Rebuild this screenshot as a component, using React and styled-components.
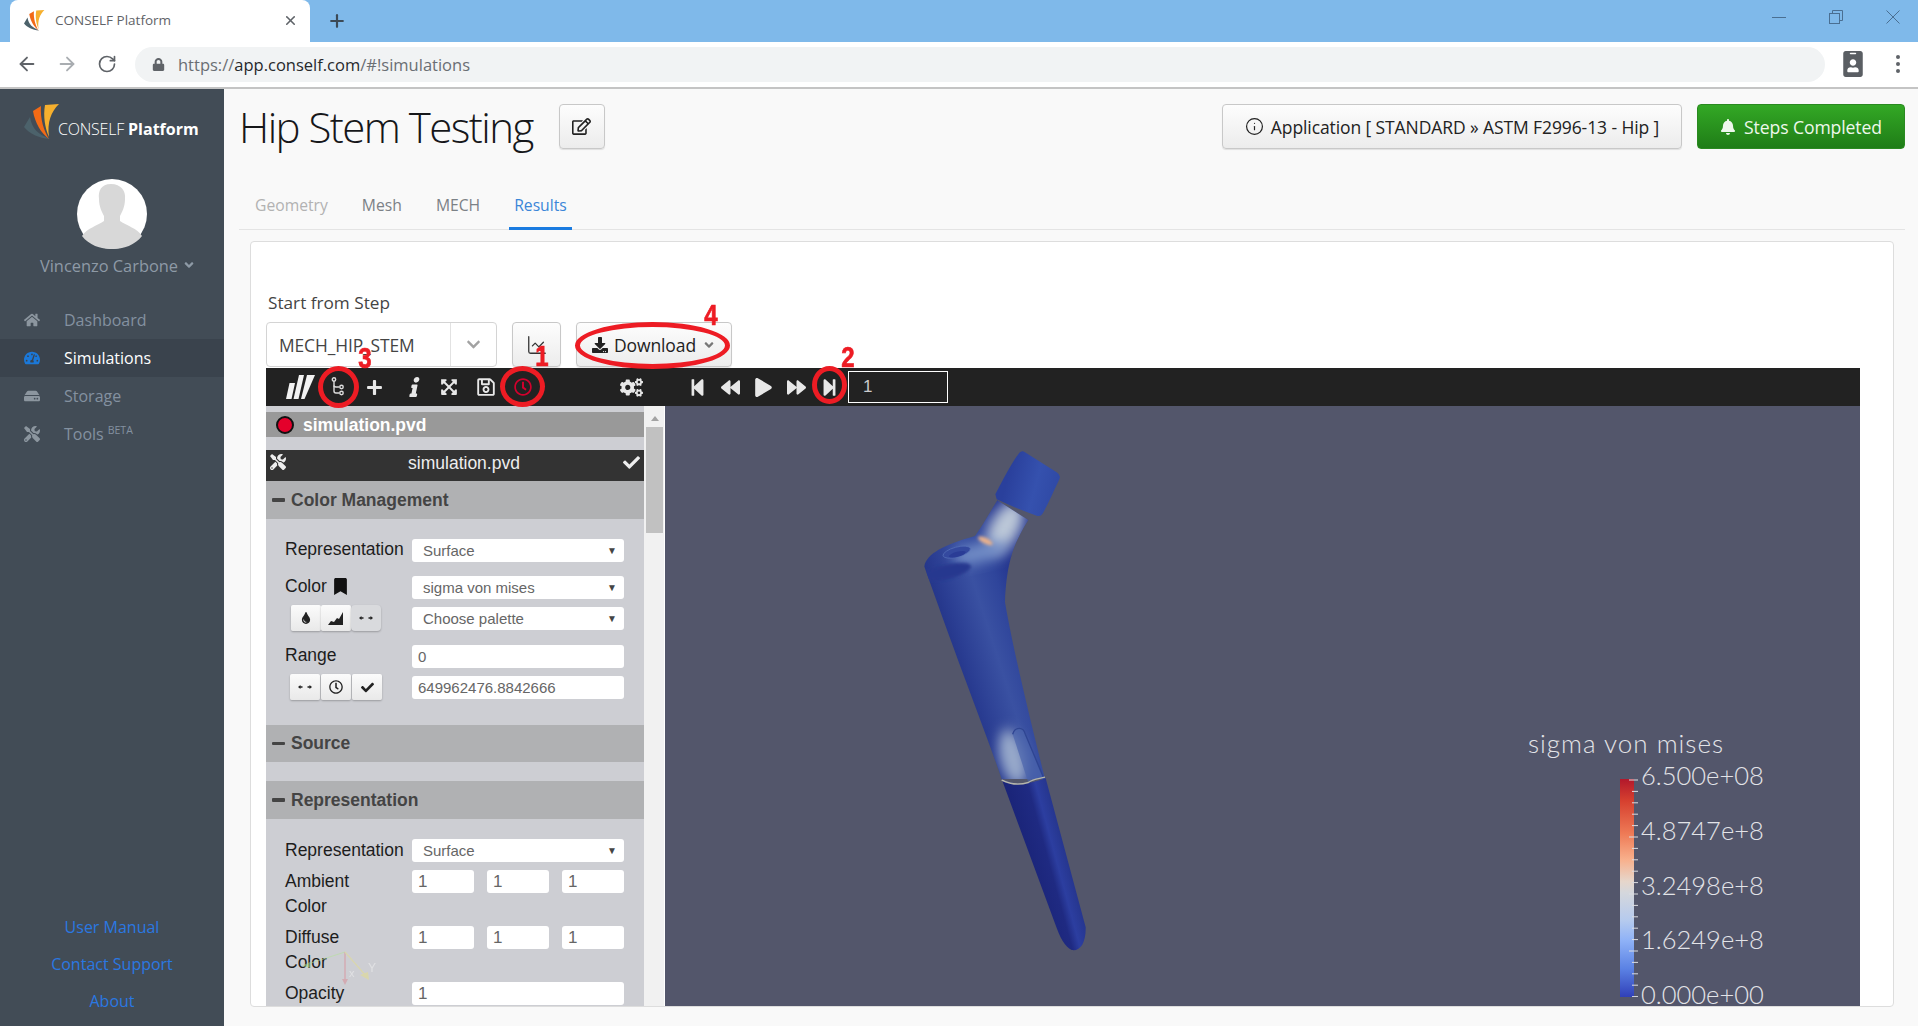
import React from 'react'
import styled, { createGlobalStyle } from 'styled-components'
import {
  FaHome, FaTachometerAlt, FaHdd, FaTools, FaChevronDown, FaAngleDown, FaRegEdit, FaBell,
  FaDownload, FaPlus, FaInfo, FaRegSave, FaRegClock, FaCogs, FaStepBackward,
  FaBackward, FaPlay, FaForward, FaStepForward, FaCheck, FaBookmark, FaTint, FaLock, FaIdBadge,
  FaExpandArrowsAlt,
} from 'react-icons/fa'
import { ArrowLeft, ArrowRight, RotateCw, Plus, X, Info, ChartLine } from 'lucide-react'

const GlobalStyle = createGlobalStyle`
  html, body { margin: 0; padding: 0; height: 100%; overflow: hidden; background: #f9f9f9; }
  * { box-sizing: border-box; }
  body { font-family: 'Open Sans', sans-serif; }
`

const Page = styled.div`
  position: relative;
  width: 1918px;
  height: 1026px;
  overflow: hidden;
  display: flex;
  flex-direction: column;
`

/* browser chrome */
const TabStrip = styled.div`
  height: 42px;
  background: #7fb9ea;
  display: flex;
  align-items: flex-end;
  padding-left: 10px;
  flex-shrink: 0;
`
const BrowserTab = styled.div`
  width: 300px;
  height: 42px;
  background: #fff;
  border-radius: 8px 8px 0 0;
  display: flex;
  align-items: center;
  padding: 0 12px 2px 14px;
  font-size: 13.5px;
  color: #5f6368;
`
const TabTitle = styled.span`
  flex: 1;
  margin-left: 10px;
`
const NewTab = styled.div`
  width: 54px;
  height: 42px;
  display: flex;
  align-items: center;
  justify-content: center;
  color: #3c4a57;
`
const WindowButtons = styled.div`
  margin-left: auto;
  height: 42px;
  display: flex;
  align-items: center;
  gap: 43px;
  padding: 0 18px 8px 0;
  color: #4a6f92;
`
const AddressBar = styled.div`
  height: 47px;
  background: #fff;
  border-bottom: 2px solid #c4c4c4;
  display: flex;
  align-items: center;
  padding: 0 16px 1px 17px;
  flex-shrink: 0;
`
const NavButton = styled.div`
  width: 40px;
  display: flex;
  justify-content: center;
  margin-left: ${p => p.$first ? '-10px' : '0'};
  color: ${p => p.$off ? '#a9adb1' : '#5f6368'};
`
const Omnibox = styled.div`
  width: 1690px;
  height: 35px;
  margin-left: 8px;
  border-radius: 18px;
  background: #f1f3f4;
  display: flex;
  align-items: center;
  padding-left: 17px;
  font-size: 16.5px;
  color: #6a6e73;
`
const Url = styled.span`
  margin-left: 13px;
  padding-top: 1px;
`
const Host = styled.span`
  color: #26282b;
`
const Dots = styled.div`
  margin-left: 30px;
  display: flex;
  flex-direction: column;
  gap: 3px;
  span {
    width: 4px;
    height: 4px;
    border-radius: 50%;
    background: #5f6368;
  }
`
const BadgeIcon = styled.div`
  margin-left: 15px;
  color: #5a5e63;
  display: flex;
`

/* app layout */
const Body = styled.div`
  flex: 1;
  display: flex;
  min-height: 0;
`
const Sidebar = styled.aside`
  width: 224px;
  flex-shrink: 0;
  background: #424c56;
  display: flex;
  flex-direction: column;
  align-items: stretch;
`
const Brand = styled.div`
  height: 90px;
  display: flex;
  padding: 15px 0 0 24px;
  color: #fff;
  font-size: 16px;
`
const BrandText = styled.span`
  margin: 14px 0 0 -2px;
  white-space: nowrap;
  font-weight: 300;
  letter-spacing: -0.2px;
  b { font-weight: 700; letter-spacing: 0; }
`
const AvatarWrap = styled.div`
  display: flex;
  justify-content: center;
`
const UserName = styled.div`
  margin-top: 4px;
  height: 24px;
  display: flex;
  justify-content: center;
  align-items: center;
  gap: 4px;
  padding-left: 12px;
  color: #8e9aa6;
  font-size: 16.4px;
`
const NavList = styled.nav`
  margin-top: 24px;
`
const NavItem = styled.div`
  height: 38px;
  display: flex;
  align-items: center;
  padding-left: 24px;
  font-size: 16px;
  background: ${p => p.$active ? '#3a434d' : 'transparent'};
  color: ${p => p.$active ? '#fff' : '#8491a0'};
  svg { color: ${p => p.$active ? '#1b78d8' : '#8c969f'}; width: 16px; height: 16px; }
  span { margin-left: 24px; }
  sup { font-size: 10.5px; margin-left: 4px; line-height: 0; }
`
const FooterLinks = styled.div`
  margin-top: auto;
  padding-bottom: 13px;
  display: flex;
  flex-direction: column;
  align-items: center;
  gap: 13px;
  color: #2a78e2;
  font-size: 16px;
  line-height: 24px;
`
const Main = styled.main`
  flex: 1;
  min-width: 0;
  padding: 15px 13px 0 15px;
  background: #f9f9f9;
`
const Header = styled.header`
  height: 45px;
  display: flex;
  align-items: center;
`
const Title = styled.h1`
  margin: 0;
  font-size: 42px;
  font-weight: 300;
  letter-spacing: -1.55px;
  color: #16171a;
  line-height: 45px;
  white-space: nowrap;
`
const GreyButton = styled.div`
  height: ${p => p.$h || 45}px;
  width: ${p => p.$w}px;
  border: 1px solid #c8c8c8;
  border-radius: 4px;
  background: linear-gradient(#fdfdfd, #ececec);
  box-shadow: 0 1px 1px rgba(0, 0, 0, 0.1);
  display: flex;
  align-items: center;
  justify-content: center;
  gap: ${p => p.$gap || 6}px;
  font-size: 17.5px;
  letter-spacing: -0.1px;
  color: #222;
  flex-shrink: 0;
`
const EditButton = styled(GreyButton)`
  margin-left: 26px;
`
const AppButton = styled(GreyButton)`
  margin-left: auto;
`
const GreenButton = styled.div`
  margin-left: 15px;
  width: 208px;
  height: 45px;
  border: 1px solid #2a8a20;
  border-radius: 4px;
  background: linear-gradient(#33a825, #1f7d17);
  color: #eef8ec;
  display: flex;
  align-items: center;
  justify-content: center;
  gap: 8px;
  font-size: 17.6px;
  letter-spacing: -0.1px;
`
const Tabs = styled.div`
  margin-top: 35px;
  height: 46px;
  border-bottom: 1px solid #e4e4e4;
  display: flex;
  padding-left: 11px;
  gap: 24px;
`
const Tab = styled.div`
  height: 46px;
  padding: 9px 5px 0;
  font-size: 15.7px;
  line-height: 24px;
  color: ${p => p.$active ? '#3b86d8' : p.$off ? '#b2b2b2' : '#7c8186'};
  border-bottom: 3px solid ${p => p.$active ? '#1a7be0' : 'transparent'};
`
const Card = styled.section`
  margin: 11px 11px 0 11px;
  height: 766px;
  background: #fff;
  border: 1px solid #ddd;
  border-radius: 4px;
  padding: 49px 33px 0 15px;
`
const StepLabel = styled.div`
  font-size: 17.2px;
  line-height: 24px;
  color: #444;
  padding-left: 2px;
`
const StepRow = styled.div`
  margin-top: 7px;
  margin-bottom: 1px;
  display: flex;
  gap: 15px;
`
const StepSelect = styled.div`
  width: 231px;
  height: 45px;
  border: 1px solid #d4d4d4;
  border-radius: 4px;
  display: flex;
  align-items: center;
  font-size: 17.4px;
  letter-spacing: -0.1px;
  color: #444;
`
const StepValue = styled.div`
  width: 183px;
  padding-left: 12px;
`
const StepArrow = styled.div`
  flex: 1;
  height: 100%;
  border-left: 1px solid #e2e2e2;
  display: flex;
  align-items: center;
  justify-content: center;
  color: #a2a2a2;
`

/* viewer */
const Toolbar = styled.div`
  height: 38px;
  background: #222;
  display: flex;
  align-items: center;
  padding-left: 16px;
  color: #eee;
`
const ToolButton = styled.div`
  width: ${p => p.$w || 37}px;
  margin-left: ${p => p.$ml || 0}px;
  display: flex;
  justify-content: center;
  color: ${p => p.$red ? '#d3002d' : '#e8e8e8'};
  flex-shrink: 0;
`
const ItalicInfo = styled(FaInfo)`
  transform: translateX(3px) skewX(-12deg);
`
const StepInput = styled.div`
  margin-left: 2px;
  width: 100px;
  height: 32px;
  border: 1px solid #fff;
  padding-left: 14px;
  font: 17px/30px 'Liberation Sans', sans-serif;
  color: #ccc;
`
const Workspace = styled.div`
  height: 600px;
  display: flex;
`
const Panel = styled.div`
  width: 378px;
  height: 600px;
  overflow: hidden;
  background: #cdced3;
  padding-top: 6px;
  font-family: 'Liberation Sans', sans-serif;
  flex-shrink: 0;
`
const FileHead = styled.div`
  height: 25px;
  background: #999;
  display: flex;
  align-items: center;
  padding: 1px 0 0 10px;
  color: #fff;
  font-size: 17.5px;
  font-weight: 700;
`
const RedDot = styled.span`
  width: 18px;
  height: 18px;
  border-radius: 50%;
  border: 2px solid #111;
  background: #e4002b;
  margin-right: 9px;
`
const FileRow = styled.div`
  margin-top: 13px;
  height: 31px;
  background: #333;
  color: #eee;
  font-size: 17.5px;
  display: flex;
  align-items: center;
  justify-content: center;
  padding: 0 0 4px 18px;
  position: relative;
`
const FileTool = styled.span`
  position: absolute;
  top: 4px;
  left: ${p => p.$left || 'auto'};
  right: ${p => p.$right || 'auto'};
  color: #eee;
`
const SectionHead = styled.div`
  height: ${p => p.$h || 38}px;
  background: #b0b1b3;
  display: flex;
  align-items: center;
  padding-left: 6px;
  gap: 6px;
  font-size: 17.5px;
  font-weight: 700;
  color: #444;
`
const Minus = styled.span`
  width: 13px;
  height: 3.5px;
  background: #444;
  border-radius: 1px;
`
const SectionBody = styled.div`
  padding: ${p => p.$pt ?? 20}px 20px ${p => p.$pb ?? 0}px 19px;
`
const Row = styled.div`
  display: flex;
  align-items: flex-start;
  margin-top: ${p => p.$mt || 0}px;
`
const Label = styled.div`
  width: 127px;
  flex-shrink: 0;
  margin: ${p => p.$low ? '-1px 0 -1px' : '-2px 0 0'};
  font-size: 17.5px;
  line-height: 25px;
  color: #1d1d1d;
  display: flex;
  align-items: center;
  gap: 5px;
`
const Side = styled.div`
  width: 127px;
  flex-shrink: 0;
  padding-left: ${p => p.$pl || 6}px;
  display: flex;
  margin: -2px 0 -1px;
`
const Field = styled.div`
  flex: 1;
  height: 23px;
  background: #fff;
  border-radius: 3px;
  font-size: ${p => p.$big ? 17 : 15}px;
  line-height: 23px;
  color: #666;
  padding-left: ${p => p.$select ? 11 : 6}px;
  position: relative;
  &::after {
    content: ${p => p.$select ? "'▼'" : 'none'};
    position: absolute;
    right: 7px;
    top: 0;
    font-size: 10px;
    color: #444;
  }
`
const TripleFields = styled.div`
  flex: 1;
  display: flex;
  gap: 13px;
`
const SmallButton = styled.div`
  width: 30px;
  height: 26px;
  background: ${p => p.$dim ? '#d9dadd' : 'linear-gradient(#fbfbfb, #e9e9e9)'};
  box-shadow: 0 1px 2px rgba(0, 0, 0, 0.25);
  border-radius: ${p => p.$dim ? '4px' : '2px'};
  display: flex;
  align-items: center;
  justify-content: center;
  color: #222;
  margin-right: ${p => p.$gap || 0}px;
`
const Scrollbar = styled.div`
  width: 20px;
  background: #f1f1f1;
  padding: 10px 1px 0 2px;
  flex-shrink: 0;
`
const ScrollUp = styled.div`
  width: 0;
  height: 0;
  margin: 0 auto 6px;
  border: 4px solid transparent;
  border-top: 0;
  border-bottom: 5px solid #a3a3a3;
`
const ScrollThumb = styled.div`
  height: 106px;
  background: #c1c1c1;
`
const Viewer = styled.div`
  flex: 1;
  margin-left: 1px;
  background: #53566b;
  position: relative;
`
const StemSvg = styled.svg`
  position: absolute;
  left: 215px;
  top: 14px;
  filter: blur(0.5px);
`
const Legend = styled.div`
  position: absolute;
  left: 863px;
  top: 324px;
  font-family: 'Lato', sans-serif;
  font-weight: 300;
  color: #e3e4e8;
`
const LegendTitle = styled.div`
  font-size: 26px;
  line-height: 26px;
  letter-spacing: 1px;
  white-space: nowrap;
`
const Scale = styled.div`
  position: relative;
  margin: 7px 0 0 92px;
  height: 243px;
  display: flex;
`
const ColorBar = styled.div`
  margin-top: 16px;
  width: 14px;
  height: 218px;
  background: linear-gradient(#b2182b, #d6402f 10%, #ee7a56 25%, #f8b08c 37%, #e6d6cb 47%, #d5d7dc 52%, #b5caee 65%, #8fb2f7 74%, #5b82e4 87%, #3040b8);
`
const Ticks = styled.svg`
  margin-top: 16px;
  margin-left: -5px;
  width: 9px;
  height: 218px;
`
const TickLabels = styled.div`
  margin-left: 3px;
  height: 243px;
  display: flex;
  flex-direction: column;
  justify-content: space-between;
  font-size: 25.5px;
  line-height: 24px;
  text-align: right;
  white-space: nowrap;
`

/* hand-drawn red annotations over the screenshot */
const Ring = styled.div`
  position: absolute;
  left: ${p => p.$x}px;
  top: ${p => p.$y}px;
  width: ${p => p.$w}px;
  height: ${p => p.$h}px;
  border: 5px solid #ed1c24;
  border-radius: 50%;
  pointer-events: none;
`
const Num = styled.div`
  position: absolute;
  left: ${p => p.$x - 12}px;
  top: ${p => p.$y - 17}px;
  width: 24px;
  text-align: center;
  font: 700 30px/34px 'Liberation Sans', sans-serif;
  -webkit-text-stroke: 0.7px #ed1c24;
  color: #ed1c24;
  transform: scaleX(0.8);
  pointer-events: none;
`
const Gizmo = styled.svg`
  position: absolute;
  left: 300px;
  top: 945px;
  opacity: 0.55;
  pointer-events: none;
`

const Logo = ({ size = 36 }) => (
  <svg width={size} height={size} viewBox="0 0 36 36">
    <path d="M0 23 L6 13 C8 25 14 30 26 35 C14 34 6 30 0 23Z" fill="#4c626b" />
    <path d="M9 7 L17 2 C16 15 20 27 25 35 C17 29 11 19 9 7Z" fill="#f26a16" />
    <path d="M21 1 L35 0 C27 8 23 18 25 33 C21 24 19 12 21 1Z" fill="#f6b02e" />
  </svg>
)

const Avatar = () => (
  <svg width="70" height="70" viewBox="0 0 70 70">
    <circle cx="35" cy="35" r="35" fill="#fff" />
    <path d="M34 5 C24 5 21 12 22 20 C22 28 25 33 27 37 L27 42 C20 47 10 49 5 57 C12 66 23 70 35 70 C47 70 58 66 65 57 C60 49 50 47 43 42 L43 37 C45 33 48 28 48 20 C49 12 44 5 34 5Z" fill="#d8d8d8" />
  </svg>
)

const RestoreIcon = () => (
  <svg width="14" height="14" viewBox="0 0 14 14" fill="none" stroke="currentColor">
    <rect x="0.5" y="3.5" width="10" height="10" />
    <path d="M3.5 3.5 V0.5 H13.5 V10.5 H10.5" />
  </svg>
)

const BarsLogo = () => (
  <svg width="29" height="24" viewBox="0 0 29 24" fill="#f2f2f2">
    <path d="M0 24 L3.5 8 H9 L5.5 24Z" />
    <path d="M7.5 24 L13 0 H18 L12.5 24Z" />
    <path d="M15 24 L21 0 H29 L18.5 24Z" />
  </svg>
)

const TreeIcon = () => (
  <svg width="14" height="20" viewBox="0 0 14 20" fill="none" stroke="#ddd" strokeWidth="1.4">
    <circle cx="3" cy="2.5" r="1.7" />
    <path d="M3 4.2 V14 Q3 16 5 16 H8.5" />
    <path d="M3 8.5 Q3 10 5 10 H8.5" />
    <circle cx="10.5" cy="10" r="1.7" />
    <circle cx="10.5" cy="16" r="1.7" />
  </svg>
)

const SplitArrows = () => (
  <svg width="14" height="8" viewBox="0 0 14 8" fill="#222">
    <path d="M0 4 L2.5 2 V3.3 H4.5 V4.7 H2.5 V6Z" />
    <path d="M14 4 L11.5 2 V3.3 H9.5 V4.7 H11.5 V6Z" />
  </svg>
)

const AreaIcon = () => (
  <svg width="16" height="13" viewBox="0 0 16 13" fill="#222">
    <path d="M0 13 L3 9 L6 10 L9 6 L11 7 L15 0 V13Z" />
  </svg>
)

const Stem = () => (
  <StemSvg width="260" height="560" viewBox="0 0 780 1568" preserveAspectRatio="none">
    <defs>
      <linearGradient id="shaft" gradientUnits="userSpaceOnUse" x1="150" y1="640" x2="440" y2="540">
        <stop offset="0" stopColor="#1c2a7c" />
        <stop offset="0.3" stopColor="#2a3d92" />
        <stop offset="0.6" stopColor="#3a51a2" />
        <stop offset="0.82" stopColor="#2f459b" />
        <stop offset="1" stopColor="#24358e" />
      </linearGradient>
      <linearGradient id="head" gradientUnits="userSpaceOnUse" x1="380" y1="170" x2="520" y2="210">
        <stop offset="0" stopColor="#2a409c" />
        <stop offset="0.6" stopColor="#3551ae" />
        <stop offset="1" stopColor="#304aa6" />
      </linearGradient>
      <linearGradient id="tail" gradientUnits="userSpaceOnUse" x1="400" y1="1120" x2="520" y2="1085">
        <stop offset="0" stopColor="#1a2478" />
        <stop offset="0.55" stopColor="#1f2a82" />
        <stop offset="0.74" stopColor="#2c3ea0" />
        <stop offset="1" stopColor="#26368f" />
      </linearGradient>
      <filter id="soft" x="-60%" y="-60%" width="220%" height="220%"><feGaussianBlur stdDeviation="18" /></filter>
      <filter id="softer" x="-50%" y="-50%" width="200%" height="200%"><feGaussianBlur stdDeviation="5" /></filter>
      <clipPath id="upper">
        <path d="M133 410 C140 375 190 350 285 325 C315 285 335 250 352 225 L445 280 C405 340 380 390 375 510 C395 620 440 800 495 1005 L365 1005 C320 880 250 720 133 410Z" />
      </clipPath>
    </defs>
    <path d="M133 410 C140 375 190 350 285 325 C315 285 335 250 352 225 L445 280 C405 340 380 390 375 510 C395 620 440 800 495 1005 L365 1005 C320 880 250 720 133 410Z" fill="url(#shaft)" />
    <g clipPath="url(#upper)">
      <ellipse cx="375" cy="300" rx="44" ry="80" transform="rotate(32 375 300)" fill="#bcc8d8" filter="url(#soft)" />
      <ellipse cx="300" cy="372" rx="85" ry="26" transform="rotate(-12 300 372)" fill="#7590c8" filter="url(#soft)" />
      <ellipse cx="316" cy="338" rx="24" ry="8" transform="rotate(24 316 338)" fill="#e8b08c" filter="url(#softer)" />
      <ellipse cx="398" cy="945" rx="38" ry="80" transform="rotate(-15 398 945)" fill="#97a9ca" filter="url(#soft)" />
      <ellipse cx="200" cy="425" rx="75" ry="20" transform="rotate(-12 200 425)" fill="#26398f" filter="url(#softer)" />
    </g>
    <path d="M398 880 C405 858 430 858 436 880 L490 1000 C470 1005 455 1010 445 1015Z" fill="#4a64ac" opacity="0.7" />
    <path d="M398 880 C405 858 430 858 436 880 L490 1000" fill="none" stroke="#2f4592" strokeWidth="4" />
    <ellipse cx="230" cy="370" rx="42" ry="14" transform="rotate(-14 230 370)" fill="#34499f" stroke="#5570b8" strokeWidth="2" />
    <ellipse cx="232" cy="376" rx="26" ry="7" transform="rotate(-14 232 376)" fill="#2a3c96" />
    <path d="M365 1005 C400 1022 440 1022 497 1003 L617 1420 C618 1465 600 1488 575 1484 C555 1476 540 1450 525 1410Z" fill="url(#tail)" />
    <path d="M365 1008 C390 1020 420 1022 445 1015 C460 1005 475 1005 495 1000" fill="none" stroke="#b5b5aa" strokeWidth="4" />
    <path d="M350 222 L346 208 C370 165 395 120 418 92 Q425 84 435 90 L530 146 Q544 154 538 166 C520 200 505 235 488 262 Q482 272 470 268 C430 255 390 240 350 222Z" fill="url(#head)" />
  </StemSvg>
)

const tickMarks = Array.from({ length: 20 }, (_, i) => i)

const steps = [FaStepBackward, FaBackward, FaPlay, FaForward, FaStepForward]

export default function App() {
  return (
    <Page>
      <GlobalStyle />
      <TabStrip>
        <BrowserTab>
          <Logo size={21} />
          <TabTitle>CONSELF Platform</TabTitle>
          <X size={15} strokeWidth={2.5} color="#5f6368" />
        </BrowserTab>
        <NewTab><Plus size={20} strokeWidth={2.6} /></NewTab>
        <WindowButtons>
          <svg width="14" height="14" viewBox="0 0 14 14" stroke="currentColor"><path d="M0 7.5 H14" /></svg>
          <RestoreIcon />
          <svg width="14" height="14" viewBox="0 0 14 14" stroke="currentColor"><path d="M0.5 0.5 L13.5 13.5 M13.5 0.5 L0.5 13.5" /></svg>
        </WindowButtons>
      </TabStrip>
      <AddressBar>
        <NavButton $first><ArrowLeft size={22} /></NavButton>
        <NavButton $off><ArrowRight size={22} /></NavButton>
        <NavButton><RotateCw size={20} /></NavButton>
        <Omnibox>
          <FaLock size={13} color="#5f6368" />
          <Url>https://<Host>app.conself.com</Host>/#!simulations</Url>
        </Omnibox>
        <BadgeIcon><FaIdBadge size={26} /></BadgeIcon>
        <Dots><span /><span /><span /></Dots>
      </AddressBar>
      <Body>
        <Sidebar>
          <Brand>
            <Logo />
            <BrandText>CONSELF <b>Platform</b></BrandText>
          </Brand>
          <AvatarWrap><Avatar /></AvatarWrap>
          <UserName>Vincenzo Carbone <FaAngleDown size={14} /></UserName>
          <NavList>
            <NavItem><FaHome /><span>Dashboard</span></NavItem>
            <NavItem $active><FaTachometerAlt /><span>Simulations</span></NavItem>
            <NavItem><FaHdd /><span>Storage</span></NavItem>
            <NavItem><FaTools /><span>Tools<sup>BETA</sup></span></NavItem>
          </NavList>
          <FooterLinks>
            <div>User Manual</div>
            <div>Contact Support</div>
            <div>About</div>
          </FooterLinks>
        </Sidebar>
        <Main>
          <Header>
            <Title>Hip Stem Testing</Title>
            <EditButton $w={46}><FaRegEdit size={19} /></EditButton>
            <AppButton $w={460} $gap={7}><Info size={19} strokeWidth={1.5} /> Application [ STANDARD » ASTM F2996-13 - Hip ]</AppButton>
            <GreenButton><FaBell size={16} /> Steps Completed</GreenButton>
          </Header>
          <Tabs>
            <Tab $off>Geometry</Tab>
            <Tab>Mesh</Tab>
            <Tab>MECH</Tab>
            <Tab $active>Results</Tab>
          </Tabs>
          <Card>
            <StepLabel>Start from Step</StepLabel>
            <StepRow>
              <StepSelect>
                <StepValue>MECH_HIP_STEM</StepValue>
                <StepArrow><FaChevronDown size={15} /></StepArrow>
              </StepSelect>
              <GreyButton $w={49}><ChartLine size={22} strokeWidth={1.4} color="#333" /></GreyButton>
              <GreyButton $w={156}><FaDownload size={16} /> Download <FaAngleDown size={14} color="#777" /></GreyButton>
            </StepRow>
            <Toolbar>
              <ToolButton><BarsLogo /></ToolButton>
              <ToolButton><TreeIcon /></ToolButton>
              <ToolButton><FaPlus size={17} /></ToolButton>
              <ToolButton><ItalicInfo size={20} /></ToolButton>
              <ToolButton><FaExpandArrowsAlt size={18} /></ToolButton>
              <ToolButton><FaRegSave size={20} /></ToolButton>
              <ToolButton $red><FaRegClock size={18} /></ToolButton>
              <ToolButton $ml={72}><FaCogs size={23} /></ToolButton>
              {steps.map((Icon, i) => (
                <ToolButton key={i} $w={33} $ml={i === 0 ? 31 : 0}><Icon size={19} /></ToolButton>
              ))}
              <StepInput>1</StepInput>
            </Toolbar>
            <Workspace>
              <Panel>
                <FileHead><RedDot />simulation.pvd</FileHead>
                <FileRow>
                  <FileTool $left="4px"><FaTools size={16} /></FileTool>
                  simulation.pvd
                  <FileTool $right="4px"><FaCheck size={17} /></FileTool>
                </FileRow>
                <SectionHead><Minus />Color Management</SectionHead>
                <SectionBody $pb={26}>
                  <Row>
                    <Label>Representation</Label>
                    <Field $select>Surface</Field>
                  </Row>
                  <Row $mt={14}>
                    <Label>Color <FaBookmark size={17} color="#111" /></Label>
                    <Field $select>sigma von mises</Field>
                  </Row>
                  <Row $mt={8}>
                    <Side>
                      <SmallButton><FaTint size={12} /></SmallButton>
                      <SmallButton><AreaIcon /></SmallButton>
                      <SmallButton $dim><SplitArrows /></SmallButton>
                    </Side>
                    <Field $select>Choose palette</Field>
                  </Row>
                  <Row $mt={15}>
                    <Label>Range</Label>
                    <Field>0</Field>
                  </Row>
                  <Row $mt={8}>
                    <Side $pl={5}>
                      <SmallButton $gap={1}><SplitArrows /></SmallButton>
                      <SmallButton $gap={1}><FaRegClock size={14} /></SmallButton>
                      <SmallButton><FaCheck size={13} /></SmallButton>
                    </Side>
                    <Field>649962476.8842666</Field>
                  </Row>
                </SectionBody>
                <SectionHead $h={37}><Minus />Source</SectionHead>
                <SectionBody $pt={19} />
                <SectionHead><Minus />Representation</SectionHead>
                <SectionBody>
                  <Row>
                    <Label $low>Representation</Label>
                    <Field $select>Surface</Field>
                  </Row>
                  <Row $mt={8}>
                    <Label $low>Ambient<br />Color</Label>
                    <TripleFields><Field $big>1</Field><Field $big>1</Field><Field $big>1</Field></TripleFields>
                  </Row>
                  <Row $mt={8}>
                    <Label $low>Diffuse<br />Color</Label>
                    <TripleFields><Field $big>1</Field><Field $big>1</Field><Field $big>1</Field></TripleFields>
                  </Row>
                  <Row $mt={8}>
                    <Label $low>Opacity</Label>
                    <Field $big>1</Field>
                  </Row>
                </SectionBody>
              </Panel>
              <Scrollbar>
                <ScrollUp />
                <ScrollThumb />
              </Scrollbar>
              <Viewer>
                <Stem />
                <Legend>
                  <LegendTitle>sigma von mises</LegendTitle>
                  <Scale>
                    <ColorBar />
                    <Ticks viewBox="0 0 9 218" stroke="#dcdde2" strokeWidth="1">
                      {tickMarks.map(i => {
                        const y = 1 + i * 11.4
                        return <line key={i} x1={i % 5 === 0 ? 0 : 3} x2="9" y1={y} y2={y} />
                      })}
                    </Ticks>
                    <TickLabels>
                      <div>6.500e+08</div>
                      <div>4.8747e+8</div>
                      <div>3.2498e+8</div>
                      <div>1.6249e+8</div>
                      <div>0.000e+00</div>
                    </TickLabels>
                  </Scale>
                </Legend>
              </Viewer>
            </Workspace>
          </Card>
        </Main>
      </Body>
      <Gizmo width="80" height="45" viewBox="0 0 80 45" fill="none">
        <path d="M5 20 L45 7" stroke="#b5e29a" strokeWidth="1.2" />
        <path d="M45 7 V37" stroke="#d98f98" strokeWidth="1.5" />
        <path d="M45 7 L67 32" stroke="#e4de8e" strokeWidth="1.2" />
        <path d="M2 21 L10 17 L11 23Z" fill="#a8e08a" />
        <path d="M42 34 H48 L45 40Z" fill="#d98f98" />
        <path d="M60 30 L68 27 L69 35Z" fill="#e4de8e" />
        <text x="49" y="32" fontSize="11" fill="#f1f1f1" fontFamily="Liberation Sans">x</text>
        <text x="68" y="27" fontSize="12" fill="#f1f1f1" fontFamily="Liberation Sans">Y</text>
      </Gizmo>
      <Ring $x={500} $y={366} $w={45} $h={41} />
      <Ring $x={812} $y={366} $w={35} $h={38} />
      <Ring $x={318} $y={366} $w={41} $h={42} />
      <Ring $x={575} $y={322} $w={155} $h={47} />
      <Num $x={542} $y={356}>1</Num>
      <Num $x={848} $y={357}>2</Num>
      <Num $x={365} $y={358}>3</Num>
      <Num $x={711} $y={315}>4</Num>
    </Page>
  )
}
